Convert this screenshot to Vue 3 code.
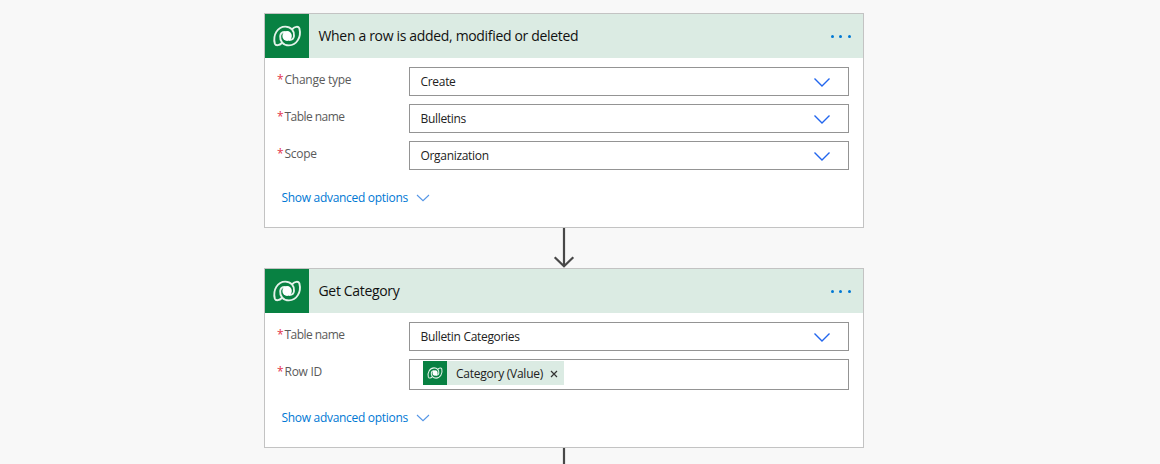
<script setup>
const cards = [
  {
    title: 'When a row is added, modified or deleted',
    kind: 'trigger',
    fields: [
      { label: 'Change type', value: 'Create' },
      { label: 'Table name', value: 'Bulletins', tight: true },
      { label: 'Scope', value: 'Organization' },
    ],
  },
  {
    title: 'Get Category',
    kind: 'action',
    fields: [
      { label: 'Table name', value: 'Bulletin Categories', tight: true },
      { label: 'Row ID', token: 'Category (Value)' },
    ],
  },
]
</script>

<template>
  <main class="canvas">
    <svg class="defs" width="0" height="0">
      <symbol id="dataverse" viewBox="0 0 44 44">
        <g fill="none" stroke="#e4f2ea" stroke-width="1.9" stroke-linecap="round" stroke-linejoin="round">
          <path d="M16.8 29C14.6 31.3 10.9 32.2 9.8 29.6C7.6 21 12.6 12.6 20.3 12.6C26 12.6 29.5 17 29 22C28.7 24.6 27 26 24.5 26" />
          <path d="M27.4 15C29.6 12.7 33.3 11.8 34.4 14.4C36.6 23 31.6 31.4 23.9 31.4C18.2 31.4 14.7 27 15.2 22C15.5 19.4 17.2 18 19.7 18" />
        </g>
        <ellipse cx="22.1" cy="22" rx="4.7" ry="5" fill="#fff" />
      </symbol>
    </svg>
    <template v-for="card in cards" :key="card.title">
      <section class="card" :class="card.kind">
        <header class="head">
          <span class="brand"><svg width="44" height="44"><use href="#dataverse" /></svg></span>
          <h2 class="title">{{ card.title }}</h2>
          <span class="more"><i></i><i></i><i></i></span>
        </header>
        <div class="fields">
          <div v-for="field in card.fields" :key="field.label" class="row">
            <label class="label" :class="{ tight: field.tight }"><span class="star">*</span>{{ field.label }}</label>
            <div v-if="field.value" class="box">
              <span class="value">{{ field.value }}</span>
              <svg class="chevron" width="18" height="11" viewBox="0 0 18 11"><path d="M1.5 1.5L9 9L16.5 1.5" fill="none" stroke="#2266ee" stroke-width="1.4" /></svg>
            </div>
            <div v-else class="box token-box">
              <span class="token">
                <span class="token-icon"><svg width="24" height="24"><use href="#dataverse" /></svg></span>
                <span class="token-text">{{ field.token }}</span>
                <svg class="remove" width="8" height="8" viewBox="0 0 8 8"><path d="M1 1L7 7M7 1L1 7" stroke="#333" stroke-width="1.2" /></svg>
              </span>
            </div>
          </div>
        </div>
        <div class="advanced">
          <span>Show advanced options</span>
          <svg width="14" height="8" viewBox="0 0 14 8"><path d="M1 1L7 6.7L13 1" fill="none" stroke="#5596e6" stroke-width="1.1" /></svg>
        </div>
      </section>
      <svg class="connector" width="22" height="40" viewBox="0 0 22 40">
        <path d="M11 0V38M1.7 29.3L11 38.3L20.3 29.3" fill="none" stroke="#484848" stroke-width="2.2" />
      </svg>
    </template>
  </main>
</template>

<style>
body { background: #f8f8f8; }
</style>

<style scoped>
.canvas {
  box-sizing: border-box;
  width: 1160px;
  height: 464px;
  padding: 13px 32px 0 0;
  display: flex;
  flex-direction: column;
  align-items: center;
  overflow: hidden;
  background: #f8f8f8;
  font-family: "Open Sans", "Noto Sans", sans-serif;
  font-size: 12px;
  color: #222;
}
.defs { position: absolute; }
.card {
  box-sizing: border-box;
  flex: none;
  width: 600px;
  border: 1px solid #c3c3c3;
  background: #fff;
}
.trigger { height: 215px; }
.action { height: 180px; }
.head {
  display: flex;
  align-items: center;
  height: 44px;
  background: #dbebe3;
}
.brand { width: 44px; height: 44px; background: #088142; }
.brand svg, .token-icon svg { display: block; }
.title {
  flex: 1;
  margin: 0 0 0 9.5px;
  font-size: 14px;
  line-height: 20px;
  font-weight: 400;
  color: #111;
  letter-spacing: -0.33px;
}
.more { display: flex; gap: 5.3px; margin-right: 12.5px; }
.more i { width: 3px; height: 3px; border-radius: 50%; background: #0078d4; }
.fields { display: grid; gap: 8px; padding: 9px 14px 0 12px; }
.row { display: flex; align-items: flex-start; }
.label {
  width: 132px;
  padding-top: 4px;
  line-height: 18px;
  color: #5a5a5a;
  letter-spacing: -0.26px;
  white-space: nowrap;
}
.tight { letter-spacing: -0.55px; }
.star { display: inline-block; width: 7.5px; font-size: 12px; letter-spacing: 0; color: #e3324a; }
.box {
  box-sizing: border-box;
  display: flex;
  align-items: center;
  width: 440px;
  height: 29px;
  border: 1px solid #949494;
  padding: 0 17.5px 0 10.5px;
}
.value { flex: 1; padding-top: 1px; line-height: 18px; letter-spacing: -0.31px; }
.chevron { margin-top: 2px; }
.token-box { height: 31px; align-items: flex-start; padding: 1px 0 0 13px; }
.token { display: flex; align-items: center; width: 141px; height: 24px; background: #dbebe3; }
.token-icon { width: 24px; height: 24px; background: #088142; }
.token-text { width: 94px; margin-left: 9px; padding-top: 1px; letter-spacing: -0.25px; white-space: nowrap; }
.remove { margin-top: 2px; }
.advanced {
  display: flex;
  align-items: center;
  gap: 8.5px;
  margin: 18px 0 0 16.5px;
  line-height: 20px;
  color: #0078d4;
  letter-spacing: -0.3px;
}
.advanced svg { margin-top: -1px; }
.connector { flex: none; }
</style>
